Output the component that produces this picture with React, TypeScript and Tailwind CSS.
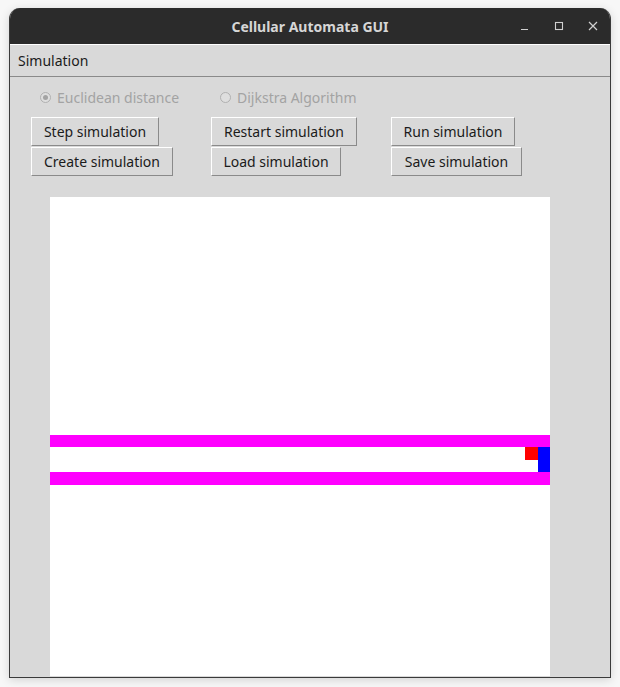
import React from "react";

const font = { fontFamily: '"Noto Sans", "Open Sans", sans-serif' };

function Btn({ label, w }: { label: string; w: string }) {
  return (
    <div
      className={`${w} h-[29px] flex items-center justify-center bg-[#d9d9d9] border border-t-white border-l-white border-r-[#8a8a8a] border-b-[#8a8a8a] text-[14px] text-[#1b1b1b]`}
    >
      {label}
    </div>
  );
}

function Radio({ label, checked }: { label: string; checked?: boolean }) {
  return (
    <div className="flex items-center gap-[6px] text-[14px] text-[#a3a3a3]">
      <span className="w-[11px] h-[11px] rounded-full border border-[#b0b0b0] bg-[#dedede] flex items-center justify-center">
        {checked && <span className="w-[5px] h-[5px] rounded-full bg-[#a3a3a3]" />}
      </span>
      <span>{label}</span>
    </div>
  );
}

export default function App() {
  return (
    <div className="w-[620px] h-[687px] bg-[#f7f7f7] pt-[8px] pl-[9px]" style={font}>
      <div className="w-[602px] h-[670px] flex flex-col rounded-t-[11px] overflow-hidden bg-[#d9d9d9] border-x border-b border-[#3a3a3a] shadow-[0_2px_10px_rgba(0,0,0,0.15)]">
        {/* title bar */}
        <div className="h-[36px] bg-[#2b2b2b] flex items-center relative shrink-0">
          <div className="w-full text-center text-[14px] font-bold text-[#d6d6d6]">Cellular Automata GUI</div>
          <div className="absolute right-[10px] top-0 h-full flex items-center gap-[20px] text-[#d0d0d0]">
            <svg width="14" height="14" viewBox="0 0 14 14"><path d="M3 10.5h7" stroke="#d0d0d0" strokeWidth="1.2" /></svg>
            <svg width="14" height="14" viewBox="0 0 14 14"><rect x="3.5" y="3.5" width="7" height="7" fill="none" stroke="#d0d0d0" strokeWidth="1.1" /></svg>
            <svg width="14" height="14" viewBox="0 0 14 14"><path d="M3 3l8 8M11 3l-8 8" stroke="#d0d0d0" strokeWidth="1.2" /></svg>
          </div>
        </div>
        {/* menu bar */}
        <div className="h-[33px] shrink-0 flex items-center border-t border-t-white border-b border-b-[#8a8a8a] pl-[8px] pb-[1px] text-[14px] text-[#1b1b1b]">
          Simulation
        </div>
        {/* radios */}
        <div className="h-[40px] shrink-0 flex items-center pl-[30px]">
          <div className="w-[180px]">
            <Radio label="Euclidean distance" checked />
          </div>
          <Radio label="Dijkstra Algorithm" />
        </div>
        {/* buttons */}
        <div className="flex pl-[21px] gap-0 shrink-0">
          <div className="flex flex-col gap-[1px] w-[180px]">
            <Btn label="Step simulation" w="w-[128px]" />
            <Btn label="Create simulation" w="w-[142px]" />
          </div>
          <div className="flex flex-col gap-[1px] w-[180px]">
            <Btn label="Restart simulation" w="w-[146px]" />
            <Btn label="Load simulation" w="w-[130px]" />
          </div>
          <div className="flex flex-col gap-[1px]">
            <Btn label="Run simulation" w="w-[124px]" />
            <Btn label="Save simulation" w="w-[131px]" />
          </div>
        </div>
        {/* canvas */}
        <div className="flex-1 pt-[21px] pl-[40px]">
          <div className="w-[500px] h-[479px] bg-white flex flex-col">
            <div className="h-[238px]" />
            <div className="h-[12px] bg-[#ff00ff]" />
            <div className="h-[25px] flex justify-end">
              <div className="w-[13px] h-[13px] bg-[#ff0000]" />
              <div className="w-[12px] h-[25px] bg-[#0000ff]" />
            </div>
            <div className="h-[13px] bg-[#ff00ff]" />
          </div>
        </div>
      </div>
    </div>
  );
}
